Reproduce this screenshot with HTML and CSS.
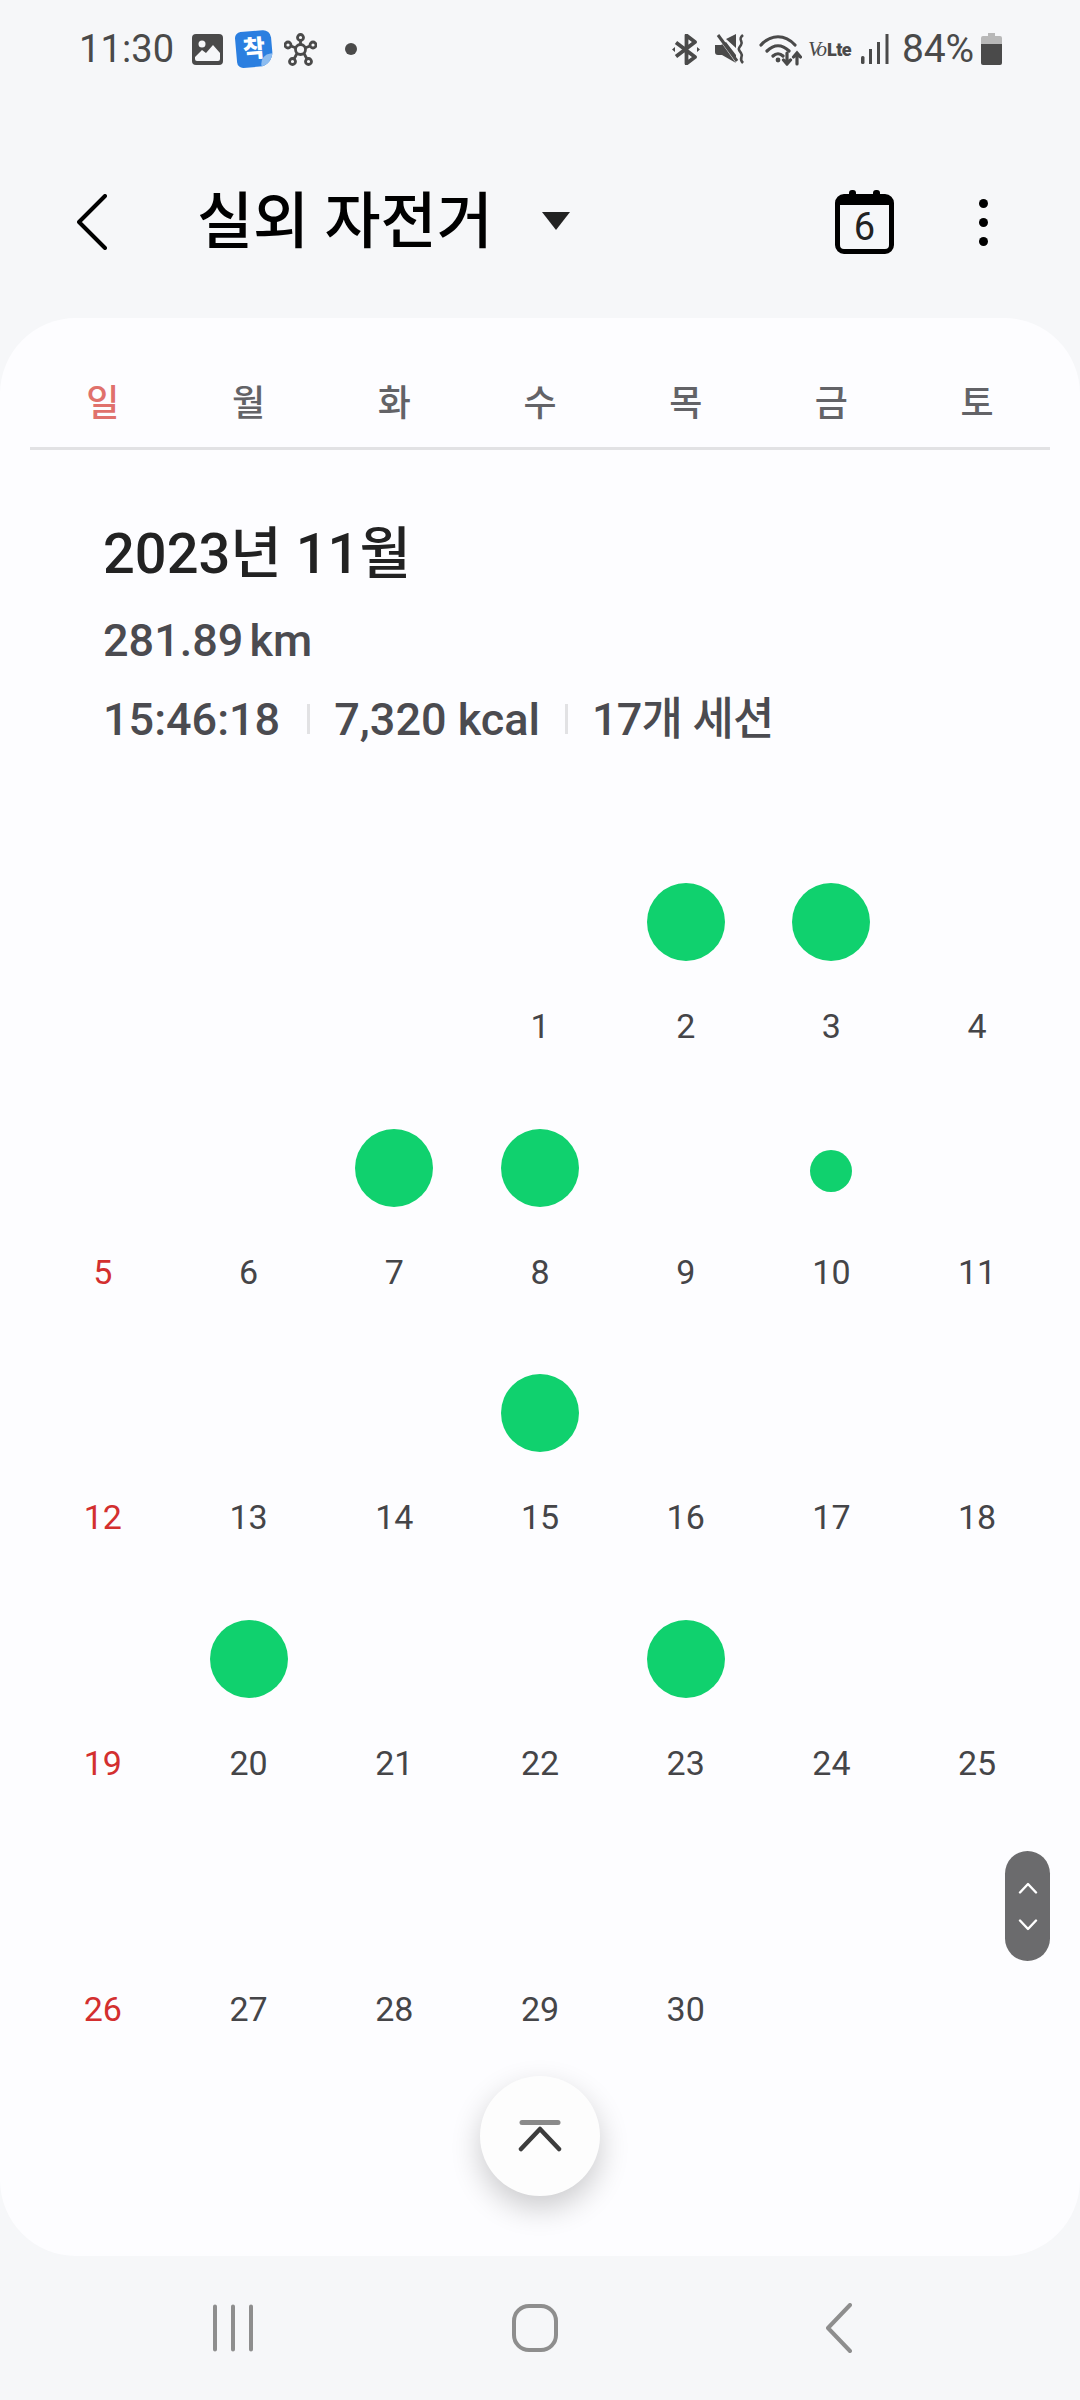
FILE: index.html
```html
<!DOCTYPE html>
<html lang="ko">
<head>
<meta charset="utf-8">
<title>실외 자전거</title>
<link rel="stylesheet" href="styles.css">
</head>
<body>
<div class="page">
  <div class="status">
    <span class="time">11:30</span>
    <svg class="i-img" viewBox="0 0 31 31"><rect width="31" height="31" rx="4" fill="#4a4a4a"/><circle cx="10" cy="10" r="3.5" fill="#f6f7f9"/><path d="M3 27v-4l7-7 4 3 7-8 7 8v6q0 2-2 2H5q-2 0-2-2z" fill="#f6f7f9"/></svg>
    <span class="sticker">착</span>
    <svg class="i-net" viewBox="0 0 33 33" fill="none" stroke="#4a4a4a" stroke-width="2.800"><circle cx="16.500" cy="16.500" r="5"/><circle cx="16.500" cy="4.500" r="3"/><circle cx="4" cy="12" r="3"/><circle cx="29" cy="12" r="3"/><circle cx="8.500" cy="28.500" r="3"/><circle cx="24.500" cy="28.500" r="3"/><path d="M16.500 7.500v4M7 13l5 2M26 13l-5 2M10 26l3-5.500M23 26l-3-5.500"/></svg>
    <span class="pip"></span>
    <div class="status-right">
      <svg class="i-bt" viewBox="0 0 28 31" fill="none" stroke="#4a4a4a" stroke-width="3.800" stroke-linejoin="round"><path d="M4 8.500l19 14.500-8.500 6.500V1.500L23 8 4 22.500"/><path d="M0 15.500l3-2.500v5zM28 15.500l-3-2.500v5z" fill="#4a4a4a" stroke="none"/></svg>
      <svg class="i-mute" viewBox="0 0 30 31"><path d="M0 11h6l5-3 10 13v8L7 21H3q-3 0-3-3zM11 5l10-5v14z" fill="#4a4a4a"/><path d="M2 1l20 28" stroke="#f6f7f9" stroke-width="2"/><path d="M3 1l19 26" stroke="#4a4a4a" stroke-width="3"/><path d="M28 1c-6 5 1 6-2 10s-3 4 0 8-3 5 2 10" fill="none" stroke="#4a4a4a" stroke-width="2.600"/></svg>
      <svg class="i-wifi" viewBox="0 0 43 33" fill="none" stroke="#4a4a4a" stroke-width="3.200" stroke-linecap="round"><path d="M2 12C12 1 26 1 36 12M8 18c7-7 15-7 22 0M14 23c3-3 7-3 10 0"/><circle cx="19" cy="27" r="2.400" fill="#4a4a4a" stroke="none"/><path d="M28 20v11M24.500 27l3.500 4 3.500-4M38 31V20M34.500 24l3.500-4 3.500 4"/></svg>
      <span class="volte"><i>Vo</i><b>Lte</b></span>
      <svg class="i-sig" viewBox="0 0 28 30" fill="#4a4a4a"><rect x="0" y="22" width="3.500" height="8" rx="1.500"/><rect x="8" y="15" width="3" height="15"/><rect x="16" y="8" width="3" height="22"/><rect x="24.500" y="0" width="3" height="30"/></svg>
      <span class="pct">84%</span>
      <svg class="i-bat" viewBox="0 0 21 32"><path d="M7 0h7v3h5q2 0 2 2v6H0V5q0-2 2-2h5z" fill="#b8b8b8"/><path d="M0 11h21v19q0 2-2 2H2q-2 0-2-2z" fill="#4a4a4a"/></svg>
    </div>
  </div>

  <header class="bar">
    <svg class="back" viewBox="0 0 30 56" fill="none" stroke="#000" stroke-width="4" stroke-linecap="round" stroke-linejoin="round"><path d="M28 2L2 28l26 26"/></svg>
    <h1 class="title">실외 자전거</h1>
    <span class="caret"></span>
    <div class="cal"><span>6</span></div>
    <div class="more"><i></i><i></i><i></i></div>
  </header>

  <main class="card">
    <div class="week">
      <span class="sun">일</span><span>월</span><span>화</span><span>수</span><span>목</span><span>금</span><span>토</span>
    </div>
    <section class="summary">
      <h2 class="month">2023년 11월</h2>
      <p class="dist">281.89 km</p>
      <p class="stats"><span>15:46:18</span><span>7,320 kcal</span><span class="sessions">17개 세션</span></p>
    </section>
    <div class="grid">
      <div class="cell"></div><div class="cell"></div><div class="cell"></div>
      <div class="cell"><div class="slot"></div><div class="n">1</div></div>
      <div class="cell"><div class="slot"><i class="dot"></i></div><div class="n">2</div></div>
      <div class="cell"><div class="slot"><i class="dot"></i></div><div class="n">3</div></div>
      <div class="cell"><div class="slot"></div><div class="n">4</div></div>

      <div class="cell"><div class="slot"></div><div class="n red">5</div></div>
      <div class="cell"><div class="slot"></div><div class="n">6</div></div>
      <div class="cell"><div class="slot"><i class="dot"></i></div><div class="n">7</div></div>
      <div class="cell"><div class="slot"><i class="dot"></i></div><div class="n">8</div></div>
      <div class="cell"><div class="slot"></div><div class="n">9</div></div>
      <div class="cell"><div class="slot"><i class="dot small"></i></div><div class="n">10</div></div>
      <div class="cell"><div class="slot"></div><div class="n">11</div></div>

      <div class="cell"><div class="slot"></div><div class="n red">12</div></div>
      <div class="cell"><div class="slot"></div><div class="n">13</div></div>
      <div class="cell"><div class="slot"></div><div class="n">14</div></div>
      <div class="cell"><div class="slot"><i class="dot"></i></div><div class="n">15</div></div>
      <div class="cell"><div class="slot"></div><div class="n">16</div></div>
      <div class="cell"><div class="slot"></div><div class="n">17</div></div>
      <div class="cell"><div class="slot"></div><div class="n">18</div></div>

      <div class="cell"><div class="slot"></div><div class="n red">19</div></div>
      <div class="cell"><div class="slot"><i class="dot"></i></div><div class="n">20</div></div>
      <div class="cell"><div class="slot"></div><div class="n">21</div></div>
      <div class="cell"><div class="slot"></div><div class="n">22</div></div>
      <div class="cell"><div class="slot"><i class="dot"></i></div><div class="n">23</div></div>
      <div class="cell"><div class="slot"></div><div class="n">24</div></div>
      <div class="cell"><div class="slot"></div><div class="n">25</div></div>

      <div class="cell"><div class="slot"></div><div class="n red">26</div></div>
      <div class="cell"><div class="slot"></div><div class="n">27</div></div>
      <div class="cell"><div class="slot"></div><div class="n">28</div></div>
      <div class="cell"><div class="slot"></div><div class="n">29</div></div>
      <div class="cell"><div class="slot"></div><div class="n">30</div></div>
    </div>

    <div class="scroller">
      <svg viewBox="0 0 20 12" fill="none" stroke="#fff" stroke-width="2.400" stroke-linecap="round" stroke-linejoin="round"><path d="M2 10.500l8-8.500 8 8.500"/></svg>
      <svg viewBox="0 0 20 12" fill="none" stroke="#fff" stroke-width="2.400" stroke-linecap="round" stroke-linejoin="round"><path d="M2 1.500l8 8.500 8-8.500"/></svg>
    </div>
    <div class="fab">
      <svg viewBox="0 0 44 32" fill="none" stroke-linecap="round" stroke-linejoin="round"><path d="M4 2.500h36" stroke="#8a8a8a" stroke-width="5"/><path d="M3 29L22 9l19 20" stroke="#3c3c3c" stroke-width="4.500"/></svg>
    </div>
  </main>

  <nav class="nav">
    <svg class="n-rec" viewBox="0 0 42 48" fill="none" stroke="#8e8e8e" stroke-width="4" stroke-linecap="round"><path d="M3 2.500v43M21 2.500v43M39 2.500v43"/></svg>
    <svg class="n-home" viewBox="0 0 46 48" fill="none" stroke="#8e8e8e" stroke-width="4"><rect x="2" y="2" width="42" height="44" rx="15"/></svg>
    <svg class="n-back" viewBox="0 0 26 50" fill="none" stroke="#8e8e8e" stroke-width="4" stroke-linecap="round" stroke-linejoin="round"><path d="M24 2L2 25l22 23"/></svg>
  </nav>
</div>
</body>
</html>
```
FILE: styles.css
```css
* { box-sizing: border-box; }
html, body { margin: 0; padding: 0; }
body {
  background: #f6f7f9;
  font-family: Roboto, "Noto Sans CJK KR", sans-serif;
  color: #222;
}
.page { width: 1080px; height: 2400px; display: flex; flex-direction: column; overflow: hidden; }

/* status bar */
.status { height: 98px; display: flex; align-items: center; padding: 0 78px 0 79px; flex: none; }
.time { font-size: 38px; color: #4a4a4a; width: 94px; letter-spacing: 0.1px; }
.i-img { width: 31px; height: 31px; margin-left: 19px; }
.sticker {
  position: relative; overflow: hidden;
  width: 36px; height: 36px; margin-left: 13px;
  background: #2b7fe0; color: #fff;
  border-radius: 6px 8px 14px 6px;
  transform: rotate(-5deg);
  display: flex; align-items: center; justify-content: center;
  font-size: 24px; font-weight: 900; line-height: 1;
}
.sticker::after {
  content: ""; position: absolute; right: -2px; bottom: -2px;
  width: 14px; height: 14px; background: #8cbcf0; border-radius: 10px 0 0 0;
}
.i-net { width: 33px; height: 33px; margin-left: 12px; }
.pip { width: 12px; height: 12px; border-radius: 50%; background: #4a4a4a; margin-left: 28px; }
.status-right { margin-left: auto; display: flex; align-items: center; }
.i-bt { width: 28px; height: 31px; }
.i-mute { width: 30px; height: 31px; margin-left: 15px; }
.i-wifi { width: 43px; height: 33px; margin-left: 14px; }
.volte { width: 42px; margin-left: 6px; display: flex; align-items: baseline; color: #4a4a4a; font-size: 18px; line-height: 1; white-space: nowrap; }
.volte i { font-family: "Liberation Serif", serif; font-size: 21px; letter-spacing: -2px; margin-right: 2px; }
.volte b { font-weight: 900; letter-spacing: -0.6px; }
.i-sig { width: 28px; height: 30px; margin-left: 11px; }
.pct { font-size: 39px; color: #4a4a4a; width: 72px; margin-left: 13px; letter-spacing: -0.2px; white-space: nowrap; }
.i-bat { width: 21px; height: 32px; margin-left: 7px; }

/* title bar */
.bar { height: 220px; padding: 28px 0 0 77px; display: flex; align-items: center; flex: none; }
.back { width: 30px; height: 56px; }
.title { margin: 0 0 0 90px; width: 345px; font-size: 61px; font-weight: 500; color: #000; line-height: 80px; white-space: nowrap; }
.caret { width: 0; height: 0; border-left: 14px solid transparent; border-right: 14px solid transparent; border-top: 18px solid #222; margin-top: -2px; }
.cal {
  position: relative; margin-left: 265px; width: 59px; height: 60px;
  border: 5px solid #000; border-top-width: 11px; border-radius: 9px;
  display: flex; align-items: center; justify-content: center;
  font-size: 38px; line-height: 1; color: #222; margin-top: 4px;
}
.cal::before, .cal::after {
  content: ""; position: absolute; top: -15px; width: 7px; height: 8px; background: #000; border-radius: 3px 3px 0 0;
}
.cal::before { left: 9px; }
.cal::after { right: 9px; }
.more { margin-left: 85px; display: flex; flex-direction: column; gap: 10px; }
.more i { display: block; width: 9px; height: 9px; border-radius: 50%; background: #000; }

/* card */
.card {
  position: relative; flex: none; height: 1938px; padding: 0 30px;
  background: #fdfdff; border-radius: 76px;
}
.week {
  display: grid; grid-template-columns: repeat(7, 1fr);
  padding: 52px 0 9px; border-bottom: 3px solid #e2e2e4;
  text-align: center; font-size: 36px; font-weight: 500; line-height: 68px; color: #636367;
}
.week .sun { color: #e0716c; }
.summary { padding: 64px 0 0 73px; }
.month { margin: 0; font-size: 56px; font-weight: 500; line-height: 80px; color: #222; }
.dist { margin: 7px 0 0; font-size: 45px; font-weight: 500; word-spacing: -5px; line-height: 80px; color: #4b4b50; }
.stats { margin: 0; display: flex; font-size: 45px; font-weight: 500; line-height: 78px; color: #4b4b50; }
.stats span + span { position: relative; margin-left: 54px; }
.stats span + span::before {
  content: ""; position: absolute; left: -27px; top: 23px; width: 3px; height: 30px; background: #e2e2e4;
}
.stats .sessions { letter-spacing: -0.8px; margin-left: 52px; }
.grid { margin-top: 78px; display: grid; grid-template-columns: repeat(7, 1fr); grid-auto-rows: 245.7px; }
.cell { display: flex; flex-direction: column; align-items: center; }
.slot { height: 170px; display: flex; align-items: center; justify-content: center; }
.dot { display: block; width: 78px; height: 78px; border-radius: 50%; background: #10d16e; }
.dot.small { width: 42px; height: 42px; margin-top: 6px; }
.n { font-size: 34px; line-height: 38px; color: #454548; }
.n.red { color: #d32f2f; }

.scroller {
  position: absolute; right: 30px; top: 1533px; width: 45px; height: 110px;
  background: #6b6b6d; border-radius: 23px;
  display: flex; flex-direction: column; align-items: center; justify-content: center; gap: 25px;
}
.scroller svg { width: 20px; height: 12px; }
.fab {
  position: absolute; left: 480px; top: 1758px; width: 120px; height: 120px;
  border-radius: 50%; background: #fdfdfd; box-shadow: 0 12px 30px rgba(0,0,0,.2);
  display: flex; align-items: center; justify-content: center;
}
.fab svg { width: 44px; height: 32px; }

/* navigation */
.nav { flex: 1; display: flex; align-items: center; padding: 0 0 0 212px; }
.n-rec { width: 42px; height: 48px; }
.n-home { width: 46px; height: 48px; margin-left: 258px; }
.n-back { width: 26px; height: 50px; margin-left: 268px; }
```
